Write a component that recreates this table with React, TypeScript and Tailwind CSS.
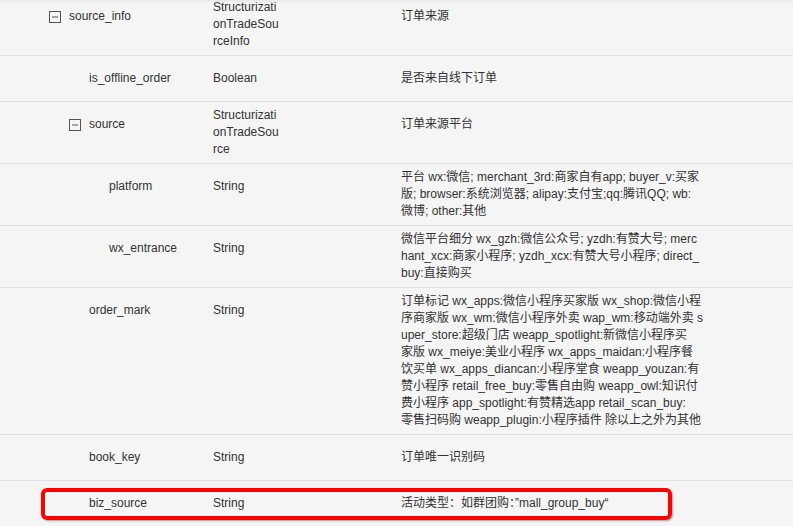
import React from "react";

type Row = {
  name: string;
  level: 0 | 1 | 2;
  icon?: boolean;
  type: string[];
  desc: string[];
  highlight?: boolean;
};

const rows: Row[] = [
  { name: "source_info", level: 0, icon: true, type: ["Structurizati", "onTradeSou", "rceInfo"], desc: ["订单来源"] },
  { name: "is_offline_order", level: 1, type: ["Boolean"], desc: ["是否来自线下订单"] },
  { name: "source", level: 1, icon: true, type: ["Structurizati", "onTradeSou", "rce"], desc: ["订单来源平台"] },
  {
    name: "platform",
    level: 2,
    type: ["String"],
    desc: [
      "平台 wx:微信; merchant_3rd:商家自有app; buyer_v:买家",
      "版; browser:系统浏览器; alipay:支付宝;qq:腾讯QQ; wb:",
      "微博; other:其他",
    ],
  },
  {
    name: "wx_entrance",
    level: 2,
    type: ["String"],
    desc: [
      "微信平台细分 wx_gzh:微信公众号; yzdh:有赞大号; merc",
      "hant_xcx:商家小程序; yzdh_xcx:有赞大号小程序; direct_",
      "buy:直接购买",
    ],
  },
  {
    name: "order_mark",
    level: 1,
    type: ["String"],
    desc: [
      "订单标记 wx_apps:微信小程序买家版 wx_shop:微信小程",
      "序商家版 wx_wm:微信小程序外卖 wap_wm:移动端外卖 s",
      "uper_store:超级门店 weapp_spotlight:新微信小程序买",
      "家版 wx_meiye:美业小程序 wx_apps_maidan:小程序餐",
      "饮买单 wx_apps_diancan:小程序堂食 weapp_youzan:有",
      "赞小程序 retail_free_buy:零售自由购 weapp_owl:知识付",
      "费小程序 app_spotlight:有赞精选app retail_scan_buy:",
      "零售扫码购 weapp_plugin:小程序插件 除以上之外为其他",
    ],
  },
  { name: "book_key", level: 1, type: ["String"], desc: ["订单唯一识别码"] },
  { name: "biz_source", level: 1, type: ["String"], desc: ["活动类型：如群团购：”mall_group_buy“"], highlight: true },
];

const levelPad: Record<number, string> = {
  0: "pl-[49px]",
  1: "pl-[69px]",
  2: "pl-[89px]",
};

function MinusIcon() {
  return (
    <svg width="12" height="12" viewBox="0 0 12 12" className="block">
      <rect x="0.5" y="0.5" width="11" height="11" fill="none" stroke="#555" strokeWidth="1" />
      <line x1="3" y1="6" x2="9" y2="6" stroke="#555" strokeWidth="1" />
    </svg>
  );
}

function Lines({ lines }: { lines: string[] }) {
  return (
    <div className="min-h-[35px] flex items-center">
      <div>
        {lines.map((l, i) => (
          <div key={i} className="whitespace-pre">
            {l}
          </div>
        ))}
      </div>
    </div>
  );
}

export default function App() {
  return (
    <div
      className="w-[793px] h-[526px] overflow-hidden bg-[#f5f5f5] text-[#333333] text-[12px] leading-[17px] relative"
      style={{ fontFamily: '"Liberation Sans", "Noto Sans CJK SC", sans-serif' }}
    >
      <div className="-mt-[6px]">
        {rows.map((r, i) => (
          <div key={i} className="relative flex items-start border-b border-[#e0e0e0]">
            <div className={`w-[213px] shrink-0 py-[5px] ${levelPad[r.level]}`}>
              <div className="min-h-[35px] flex items-center">
                <span className="w-[12px] h-[12px] mr-[8px] shrink-0">{r.icon ? <MinusIcon /> : null}</span>
                <span>{r.name}</span>
              </div>
            </div>
            <div className="w-[187px] shrink-0 py-[5px]">
              <Lines lines={r.type} />
            </div>
            <div className="flex-1 py-[5px] pl-[1px]">
              <Lines lines={r.desc} />
            </div>
            {r.highlight ? (
              <div className="absolute left-[41px] top-[7px] w-[631px] h-[32px] border-[4px] border-[#ff0000] rounded-[6px] shadow-[1px_1px_2px_rgba(0,0,0,0.35)]" />
            ) : null}
          </div>
        ))}
      </div>
      <div className="absolute left-0 top-0 w-full h-[3px] bg-gradient-to-b from-[#e6e6e6] to-transparent" />
    </div>
  );
}
